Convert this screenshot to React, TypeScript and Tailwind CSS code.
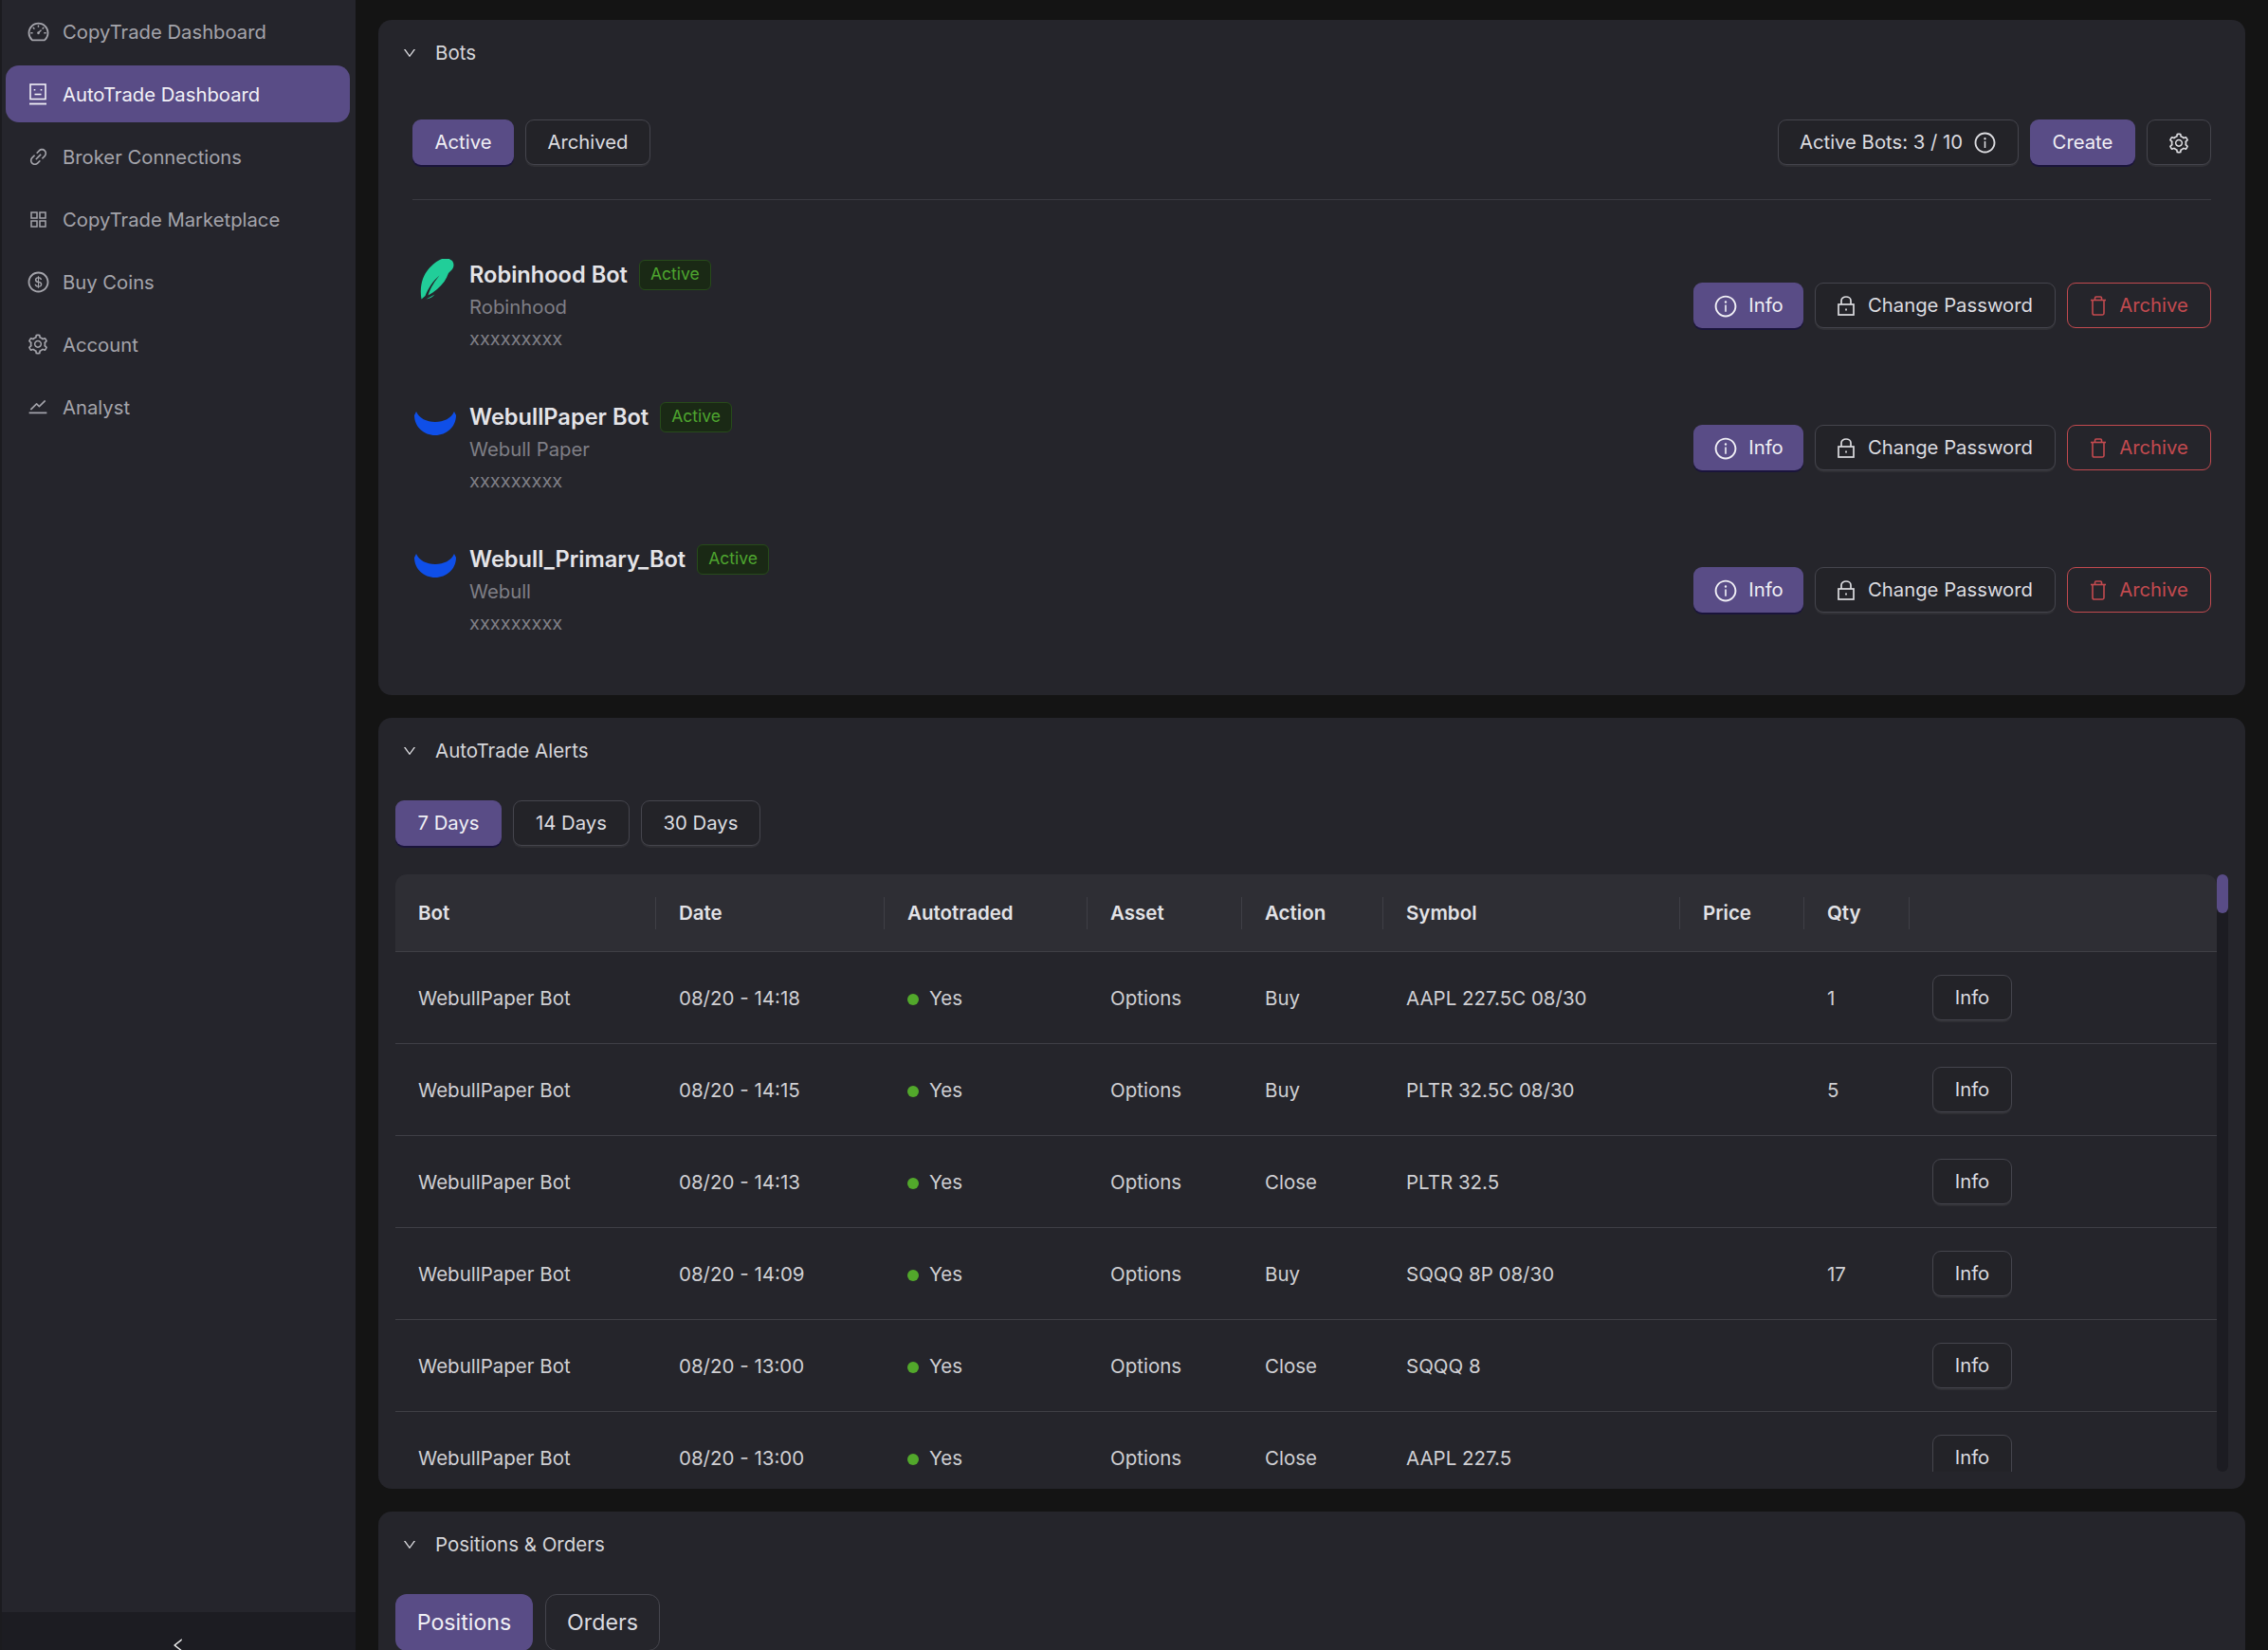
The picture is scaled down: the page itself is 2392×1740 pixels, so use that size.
import React from "react";
import { AiOutlineDashboard, AiOutlineLink, AiOutlineAppstore, AiOutlineDollar, AiOutlineSetting, AiOutlineStock, AiOutlineInfoCircle, AiOutlineDown, AiOutlineLeft } from "react-icons/ai";

const RobotIcon = () => (
  <svg width="22" height="23" viewBox="0 0 22 23" fill="none" stroke="currentColor" strokeWidth="1.6">
    <rect x="3" y="1" width="16" height="15.5" />
    <path d="M2 21.5h18" strokeWidth="1.8" />
    <path d="M7.5 6v1.6M14.5 6v1.6" />
    <path d="M7.5 11.5h7" />
  </svg>
);

const TrashIcon = () => (
  <svg width="18" height="21" viewBox="0 0 18 21" fill="none" stroke="currentColor" strokeWidth="1.6">
    <path d="M1 4.5h16" />
    <path d="M3 4.5v13.7a1.8 1.8 0 0 0 1.8 1.8h8.4a1.8 1.8 0 0 0 1.8-1.8V4.5" />
    <path d="M5.5 4.5V2.2a1.2 1.2 0 0 1 1.2-1.2h4.6a1.2 1.2 0 0 1 1.2 1.2v2.3" />
  </svg>
);

const LockIcon = () => (
  <svg width="18" height="21" viewBox="0 0 18 21" fill="none" stroke="currentColor" strokeWidth="1.7">
    <path d="M4 9V5a5 4 0 0 1 10 0v4" />
    <rect x="1" y="9" width="16" height="11" />
    <path d="M9 13.5v2" />
  </svg>
);

const nav: [string, React.ReactNode][] = [
  ["CopyTrade Dashboard", <AiOutlineDashboard size={25} />],
  ["AutoTrade Dashboard", <RobotIcon />],
  ["Broker Connections", <AiOutlineLink size={23} />],
  ["CopyTrade Marketplace", <AiOutlineAppstore size={23} />],
  ["Buy Coins", <AiOutlineDollar size={25} />],
  ["Account", <AiOutlineSetting size={24} />],
  ["Analyst", <AiOutlineStock size={24} />],
];

const Feather = () => (
  <svg width="38" height="46" viewBox="12 6 38 46" fill="none" className="ml-[7px]">
    <path d="M29 10 C33 7 37 5 42 5 L47 8 C49 11 49 14 47 17 L43 21 C41 27 37 33 31 38 C28 40.5 25 42.5 21.5 44.5 C24 36 29 29 33.5 23.5 C27 29 21.5 37 18.5 45 L14.5 48.5 C13 40 14 33 16 27 C19 19 24 14 29 10 Z" fill="#21ce99" />
    <path d="M19.5 48.5 L28.5 43.5 C26.5 46 23.5 48 19.5 48.5 Z" fill="#21ce99" />
  </svg>
);

const Webull = () => (
  <svg width="46" height="26" viewBox="0 0 46 26" className="ml-[1px] mt-[10px]">
    <path d="M1 5 C1 17 11 26 23 26 C35 26 45 17 45 5 L43 1 C40 8 32 12 23 12 C14 12 6 8 3 1 Z" fill="#0f4fe8" />
  </svg>
);

const btn = "flex items-center justify-center h-12 rounded-[9px] text-[20.3px] whitespace-nowrap pt-[1px]";
const outline = `${btn} border border-[#45454d] text-[#dcdce0] shadow-[0_2px_0_rgba(255,255,255,0.05)] bg-[#232328]`;
const primary = `${btn} bg-[#594c86] text-[#f0eff5] shadow-[0_2px_0_rgba(20,10,70,0.6)]`;

const bots = [
  { name: "Robinhood Bot", sub: "Robinhood", logo: <Feather /> },
  { name: "WebullPaper Bot", sub: "Webull Paper", logo: <Webull /> },
  { name: "Webull_Primary_Bot", sub: "Webull", logo: <Webull /> },
];

const cols = ["Bot", "Date", "Autotraded", "Asset", "Action", "Symbol", "Price", "Qty", ""];
const widths = ["w-[275px]", "w-[241px]", "w-[214px]", "w-[163px]", "w-[149px]", "w-[313px]", "w-[131px]", "w-[111px]", "flex-1"];

const rows = [
  ["08/20 - 14:18", "Buy", "AAPL 227.5C 08/30", "1"],
  ["08/20 - 14:15", "Buy", "PLTR 32.5C 08/30", "5"],
  ["08/20 - 14:13", "Close", "PLTR 32.5", ""],
  ["08/20 - 14:09", "Buy", "SQQQ 8P 08/30", "17"],
  ["08/20 - 13:00", "Close", "SQQQ 8", ""],
  ["08/20 - 13:00", "Close", "AAPL 227.5", ""],
];

const CardHead = ({ title }: { title: string }) => (
  <div className="flex items-center h-[70px] pl-[25px] text-[20.5px] text-[#d6d6da]">
    <AiOutlineDown size={16} className="text-[#e0e0e4]" />
    <span className="ml-[19px]">{title}</span>
  </div>
);

export default function App() {
  return (
    <div className="w-[2392px] h-[1740px] flex overflow-hidden bg-[#141414] font-['Inter',sans-serif]">
      <aside className="w-[375px] h-full flex flex-col bg-[#25252c] border-l-2 border-[#1b1b1f]">
        <nav className="flex-1 flex flex-col gap-[6px] pl-[4px] pr-[6px] pt-[3px]">
          {nav.map(([label, icon], i) => (
            <div
              key={label}
              className={`flex items-center h-[60px] rounded-[14px] ${i === 1 ? "bg-[#594c86] text-[#f2f1f7]" : "text-[#a4a4ab]"}`}
            >
              <span className="w-[60px] flex justify-center pl-[8px] shrink-0">{icon}</span>
              <span className="text-[20.25px] pt-[2px]">{label}</span>
            </div>
          ))}
        </nav>
        <div className="h-[40px] bg-[#1c1c22] flex justify-center items-start pt-[26px] text-[#f0f0f0] pr-[2px]">
          <AiOutlineLeft size={18} />
        </div>
      </aside>

      <main className="w-[2017px] pl-[24px] pt-[21px] overflow-hidden">
        <section className="w-[1969px] h-[712px] rounded-[14px] bg-[#25252b] mb-[24px]">
          <CardHead title="Bots" />
          <div className="pl-[36px] pr-[36px]">
            <div className="flex items-center justify-between pt-[35px] pb-[36px] border-b border-[#3a3a41]">
              <div className="flex gap-[12px]">
                <div className={`${primary} w-[107px]`}>Active</div>
                <div className={`${outline} w-[132px]`}>Archived</div>
              </div>
              <div className="flex gap-[12px]">
                <div className={`${outline} w-[254px] gap-[11px]`}>
                  <span>Active Bots: 3 / 10</span>
                  <AiOutlineInfoCircle size={25} />
                </div>
                <div className={`${primary} w-[111px]`}>Create</div>
                <div className={`${outline} w-[68px]`}><AiOutlineSetting size={24} /></div>
              </div>
            </div>
            <div className="flex flex-col pt-[37px]">
              {bots.map((b) => (
                <div key={b.name} className="flex items-center justify-between h-[150px]">
                  <div className="flex pb-[1px]">
                    <span className="w-[60px] shrink-0">{b.logo}</span>
                    <div className="flex flex-col">
                      <div className="flex items-center h-[34px] gap-[12px]">
                        <span className="text-[23.6px] font-semibold text-[#e4e4e8]">{b.name}</span>
                        <span className="h-[32px] px-[11px] flex items-center rounded-[6px] border border-[#274b1a] bg-[#1a2915] text-[#4ea52f] text-[17.5px]">Active</span>
                      </div>
                      <span className="text-[20.3px] leading-[34px] text-[#7f7f86]">{b.sub}</span>
                      <span className="text-[20px] leading-[32px] text-[#7f7f86]">xxxxxxxxx</span>
                    </div>
                  </div>
                  <div className="flex gap-[12px] pb-[2px]">
                    <div className={`${primary} w-[116px] gap-[11px]`}><AiOutlineInfoCircle size={26} /><span>Info</span></div>
                    <div className={`${outline} w-[254px] gap-[14px]`}><LockIcon /><span>Change Password</span></div>
                    <div className={`${btn} w-[152px] gap-[13px] border border-[#c24a4f] text-[#c24a4f]`}><TrashIcon /><span>Archive</span></div>
                  </div>
                </div>
              ))}
            </div>
          </div>
        </section>

        <section className="w-[1969px] h-[813px] rounded-[14px] bg-[#25252b] mb-[24px]">
          <CardHead title="AutoTrade Alerts" />
          <div className="pl-[18px] pr-[18px]">
            <div className="flex gap-[12px] mt-[17px] mb-[30px]">
              <div className={`${primary} w-[112px]`}>7 Days</div>
              <div className={`${outline} w-[123px]`}>14 Days</div>
              <div className={`${outline} w-[126px]`}>30 Days</div>
            </div>
            <div className="flex h-[630px]">
              <div className="w-[1921px] h-full overflow-hidden">
                <div className="flex items-center h-[82px] bg-[#2e2e34] rounded-t-[12px] border-b border-[#3f3f46] text-[20.5px] font-semibold text-[#e2e2e6]">
                  {cols.map((c, i) => (
                    <div key={i} className={`${widths[i]} h-[34px] flex items-center pl-[24px] pt-[2px] ${i < 8 ? "border-r border-[#3f3f46]" : ""}`}>{c}</div>
                  ))}
                </div>
                {rows.map((r, i) => (
                  <div key={i} className="flex items-center h-[97px] shrink-0 border-b border-[#3f3f46] text-[20.5px] text-[#d0d0d4]">
                    <div className={`${widths[0]} pl-[24px] pt-[3px]`}>WebullPaper Bot</div>
                    <div className={`${widths[1]} pl-[24px] pt-[3px]`}>{r[0]}</div>
                    <div className={`${widths[2]} pl-[24px] pt-[3px] flex items-center gap-[11px]`}>
                      <span className="w-[12px] h-[12px] rounded-full bg-[#52a82b]" />Yes
                    </div>
                    <div className={`${widths[3]} pl-[24px] pt-[3px]`}>Options</div>
                    <div className={`${widths[4]} pl-[24px] pt-[3px]`}>{r[1]}</div>
                    <div className={`${widths[5]} pl-[24px] pt-[3px]`}>{r[2]}</div>
                    <div className={`${widths[6]} pl-[24px]`} />
                    <div className={`${widths[7]} pl-[24px] pt-[3px]`}>{r[3]}</div>
                    <div className={`${widths[8]} pl-[24px]`}>
                      <div className={`${outline} w-[84px]`}>Info</div>
                    </div>
                  </div>
                ))}
              </div>
              <div className="w-[12px] h-full rounded-full bg-[#1c1c22]">
                <div className="h-[41px] rounded-full bg-[#594c86]" />
              </div>
            </div>
          </div>
        </section>

        <section className="w-[1969px] h-[300px] rounded-[14px] bg-[#25252b]">
          <CardHead title="Positions & Orders" />
          <div className="flex gap-[13px] pl-[18px] pt-[17px]">
            <div className="flex items-center justify-center w-[145px] h-[60px] rounded-[12px] bg-[#594c86] text-[#f0eff5] text-[23.2px]">Positions</div>
            <div className="flex items-center justify-center w-[121px] h-[60px] rounded-[12px] border border-[#45454d] text-[#dcdce0] text-[23.2px]">Orders</div>
          </div>
        </section>
      </main>
    </div>
  );
}
